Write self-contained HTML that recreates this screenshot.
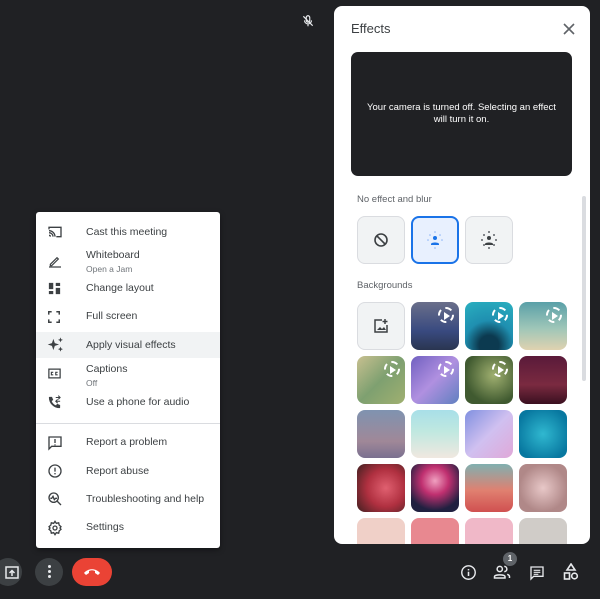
<!DOCTYPE html>
<html><head><meta charset="utf-8"><style>
*{margin:0;padding:0;box-sizing:border-box}
body{width:600px;height:599px;background:#202124;position:relative;overflow:hidden;font-family:"Liberation Sans",Arial,sans-serif}
.abs{position:absolute}
#panel{left:334px;top:6px;width:256px;height:538px;background:#fff;border-radius:8px;overflow:hidden}
#menu{left:36px;top:212px;width:184px;height:336px;background:#fff;border-radius:3px;box-shadow:0 2px 6px rgba(0,0,0,.4)}
.mi{position:absolute;left:0;width:184px;font-size:10.5px;color:#3c4043}
.mi .t{position:absolute;left:50px}
.mi .s{position:absolute;left:50px;font-size:8.5px;color:#70757a}
.mi svg{position:absolute;left:11px}
.tile{position:absolute;width:48px;height:48px;border-radius:8px;overflow:hidden}
.play{position:absolute;right:5px;top:5px;width:16px;height:16px;border-radius:50%;border:2px dashed #fff;}
.play:after{content:"";position:absolute;left:4px;top:2.5px;border-left:6px solid #fff;border-top:4px solid transparent;border-bottom:4px solid transparent}
.btn{position:absolute;border-radius:50%}
</style></head><body>

<!-- muted mic -->
<svg class="abs" style="left:301px;top:14px" width="14" height="14" viewBox="0 0 24 24"><path d="M12 3a3 3 0 0 0-3 3v5a3 3 0 0 0 6 0V6a3 3 0 0 0-3-3zM6 11a6 6 0 0 0 12 0M12 17v4" stroke="#e8eaed" stroke-width="2" fill="none"/><path d="M4 4l16 16" stroke="#e8eaed" stroke-width="2"/></svg>

<div id="panel" class="abs">
  <div class="abs" style="left:17px;top:15px;font-size:13px;color:#3c4043">Effects</div>
  <svg class="abs" style="left:229px;top:17px" width="12" height="12" viewBox="0 0 12 12"><path d="M1 1l10 10M11 1L1 11" stroke="#5f6368" stroke-width="1.6"/></svg>
  <div class="abs" style="left:17px;top:46px;width:221px;height:124px;background:#202124;border-radius:7px;color:#fff;font-size:9.5px;text-align:center;padding-top:50px;line-height:12px">Your camera is turned off. Selecting an effect<br>will turn it on.</div>
  <div class="abs" style="left:248px;top:190px;width:4px;height:185px;background:#dadce0;border-radius:2px"></div>
  <div class="abs" style="left:23px;top:188px;font-size:9.5px;color:#5f6368">No effect and blur</div>
  <div class="tile" style="left:23px;top:210px;background:#f1f3f4;border:1px solid #dadce0">
    <svg style="position:absolute;left:15px;top:15px" width="16" height="16" viewBox="0 0 16 16"><circle cx="8" cy="8" r="6" stroke="#3c4043" stroke-width="1.6" fill="none"/><path d="M4 4l8 8" stroke="#3c4043" stroke-width="1.6"/></svg></div>
  <div class="tile" style="left:77px;top:210px;background:#e8f0fe;border:2px solid #1a73e8">
    <svg style="position:absolute;left:12px;top:12px" width="20" height="20" viewBox="0 0 20 20"><circle cx="10" cy="8" r="2" fill="#1a73e8"/><path d="M6 14c0-2 8-2 8 0v1H6z" fill="#1a73e8"/><g fill="#8ab4f8"><circle cx="3" cy="10" r=".8"/><circle cx="17" cy="10" r=".8"/><circle cx="10" cy="2" r=".8"/><circle cx="10" cy="18" r=".8"/><circle cx="5" cy="5" r=".8"/><circle cx="15" cy="5" r=".8"/></g></svg></div>
  <div class="tile" style="left:131px;top:210px;background:#f1f3f4;border:1px solid #dadce0">
    <svg style="position:absolute;left:13px;top:13px" width="20" height="20" viewBox="0 0 20 20"><circle cx="10" cy="8" r="2" fill="#3c4043"/><path d="M6 14c0-2 8-2 8 0v1H6z" fill="#3c4043"/><g fill="#5f6368"><circle cx="3" cy="10" r="1"/><circle cx="17" cy="10" r="1"/><circle cx="10" cy="2" r="1"/><circle cx="10" cy="18" r="1"/><circle cx="5" cy="5" r="1"/><circle cx="15" cy="5" r="1"/><circle cx="5" cy="15" r="1"/><circle cx="15" cy="15" r="1"/></g></svg></div>
  <div class="abs" style="left:23px;top:274px;font-size:9.5px;color:#5f6368">Backgrounds</div>
  <div class="tile" style="left:23px;top:296px;background:#f1f3f4;border:1px solid #dadce0">
    <svg style="position:absolute;left:15px;top:15px" width="16" height="16" viewBox="0 0 16 16"><path d="M9 2H2v12h12V7" stroke="#3c4043" stroke-width="1.5" fill="none"/><path d="M12 1v5M9.5 3.5h5" stroke="#3c4043" stroke-width="1.5"/><path d="M4 12l3-3 2 2 2-2 2 3z" fill="#3c4043"/></svg></div>
  <div class="tile" style="left:77px;top:296px;background:linear-gradient(#6a6f8a,#394a80 60%,#2a3550)"><div class="play"></div></div>
  <div class="tile" style="left:131px;top:296px;background:radial-gradient(circle at 50% 90%,#0c3a50 20%,#1f8fb0 50%,#2ab0c0)"><div class="play"></div></div>
  <div class="tile" style="left:185px;top:296px;background:linear-gradient(#5aa0a8,#9fc6b8 55%,#e0d2b0)"><div class="play"></div></div>
  <div class="tile" style="left:23px;top:350px;background:linear-gradient(135deg,#c8c090,#7ea070 50%,#a0b070)"><div class="play"></div></div>
  <div class="tile" style="left:77px;top:350px;background:linear-gradient(135deg,#7060c0,#b090e0 50%,#6080c0)"><div class="play"></div></div>
  <div class="tile" style="left:131px;top:350px;background:radial-gradient(circle at 60% 40%,#a0b070,#405a30 70%)"><div class="play"></div></div>
  <div class="tile" style="left:185px;top:350px;background:linear-gradient(#5a1a3a,#7a2a40 60%,#3a1020)"></div>
  <div class="tile" style="left:23px;top:404px;background:linear-gradient(#7f93b0,#a08898 65%,#7a7090)"></div>
  <div class="tile" style="left:77px;top:404px;background:linear-gradient(#a8dfe8,#c0e8e0 45%,#f0e8e0)"></div>
  <div class="tile" style="left:131px;top:404px;background:linear-gradient(135deg,#8090e0,#d0c0f0 50%,#e0a8d8)"></div>
  <div class="tile" style="left:185px;top:404px;background:radial-gradient(circle,#30b8d0,#0878a0 80%)"></div>
  <div class="tile" style="left:23px;top:458px;background:radial-gradient(circle at 60% 50%,#e06070,#b03040 50%,#402020)"></div>
  <div class="tile" style="left:77px;top:458px;background:radial-gradient(circle at 50% 35%,#f0a0c0,#c03070 35%,#202040 75%)"></div>
  <div class="tile" style="left:131px;top:458px;background:linear-gradient(#80b0b0,#e08070 55%,#d05050)"></div>
  <div class="tile" style="left:185px;top:458px;background:radial-gradient(circle,#e8c8c8,#b08888 70%)"></div>
  <div class="tile" style="left:23px;top:512px;background:#f0d0c8"></div>
  <div class="tile" style="left:77px;top:512px;background:#e88890"></div>
  <div class="tile" style="left:131px;top:512px;background:#f0b8c8"></div>
  <div class="tile" style="left:185px;top:512px;background:#d0ccc8"></div>
</div>

<div id="menu" class="abs">
  <div class="mi" style="top:12px;height:16px"><svg width="16" height="16" viewBox="0 0 24 24" style="top:0"><path d="M3 8V5h18v14h-7M3 17a2 2 0 0 1 2 2M3 13a6 6 0 0 1 6 6M3 10a9 9 0 0 1 9 9" stroke="#3c4043" stroke-width="2" fill="none"/></svg><span class="t" style="top:2px">Cast this meeting</span></div>
  <div class="mi" style="top:37px"><svg width="16" height="16" viewBox="0 0 24 24" style="top:4px"><path d="M5 17l10-10 2 2-10 10H5zM3 21h18" stroke="#3c4043" stroke-width="1.8" fill="none"/></svg><span class="t" style="top:0">Whiteboard</span><span class="s" style="top:15px">Open a Jam</span></div>
  <div class="mi" style="top:69px"><svg width="15" height="15" viewBox="0 0 24 24" style="top:0"><path d="M3 3h7v10H3zM14 3h7v5h-7zM3 16h7v5H3zM14 11h7v10h-7z" fill="#3c4043"/></svg><span class="t" style="top:1px">Change layout</span></div>
  <div class="mi" style="top:98px"><svg width="14" height="14" viewBox="0 0 24 24" style="top:0"><path d="M3 8V3h5M16 3h5v5M21 16v5h-5M8 21H3v-5" stroke="#3c4043" stroke-width="2.5" fill="none"/></svg><span class="t" style="top:0">Full screen</span></div>
  <div class="mi" style="top:120px;height:26px;background:#f1f3f4"><svg width="17" height="17" viewBox="0 0 24 24" style="top:4px"><path d="M9 4l2 6 6 2-6 2-2 6-2-6-6-2 6-2zM19 2l1 2.5 2.5 1-2.5 1L19 9l-1-2.5-2.5-1 2.5-1zM19 15l1 2.5 2.5 1-2.5 1L19 22l-1-2.5-2.5-1 2.5-1z" fill="#3c4043"/></svg><span class="t" style="top:7px">Apply visual effects</span></div>
  <div class="mi" style="top:151px"><svg width="15" height="15" viewBox="0 0 24 24" style="top:3px"><rect x="3" y="5" width="18" height="14" stroke="#3c4043" stroke-width="2" fill="none"/><path d="M10 10H7v4h3M17 10h-3v4h3" stroke="#3c4043" stroke-width="1.8" fill="none"/></svg><span class="t" style="top:0">Captions</span><span class="s" style="top:15px">Off</span></div>
  <div class="mi" style="top:183px"><svg width="15" height="15" viewBox="0 0 24 24" style="top:0"><path d="M4 3h4l2 5-2.5 1.5a11 11 0 0 0 7 7L16 14l5 2v4a1 1 0 0 1-1 1A17 17 0 0 1 3 4a1 1 0 0 1 1-1z" fill="#3c4043"/><path d="M14 4h7M18 1l3 3-3 3M21 10h-7M17 7l-3 3 3 3" stroke="#3c4043" stroke-width="1.6" fill="none"/></svg><span class="t" style="top:1px">Use a phone for audio</span></div>
  <div class="abs" style="left:0;top:211px;width:184px;height:1px;background:#dadce0"></div>
  <div class="mi" style="top:223px"><svg width="16" height="16" viewBox="0 0 24 24" style="top:0"><path d="M3 3h18v14H7l-4 4z" stroke="#3c4043" stroke-width="2" fill="none"/><path d="M12 6v6M12 14v1.5" stroke="#3c4043" stroke-width="2"/></svg><span class="t" style="top:1px">Report a problem</span></div>
  <div class="mi" style="top:251px"><svg width="16" height="16" viewBox="0 0 24 24" style="top:0"><circle cx="12" cy="12" r="9" stroke="#3c4043" stroke-width="2" fill="none"/><path d="M12 7v6M12 15v2" stroke="#3c4043" stroke-width="2"/></svg><span class="t" style="top:2px">Report abuse</span></div>
  <div class="mi" style="top:279px"><svg width="16" height="16" viewBox="0 0 24 24" style="top:0"><circle cx="10" cy="10" r="7" stroke="#3c4043" stroke-width="2" fill="none"/><path d="M15 15l6 6M5 11h2l2-3 2 5 2-2h2" stroke="#3c4043" stroke-width="2" fill="none"/></svg><span class="t" style="top:2px">Troubleshooting and help</span></div>
  <div class="mi" style="top:308px"><svg width="16" height="16" viewBox="0 0 24 24" style="top:0"><path d="M12 2l2 3 3.5-.8.8 3.5L21 10l-1.5 2 1.5 2-2.7 2.3-.8 3.5L14 19l-2 3-2-3-3.5.8-.8-3.5L3 14l1.5-2L3 10l2.7-2.3.8-3.5L10 5z" stroke="#3c4043" stroke-width="2" fill="none"/><circle cx="12" cy="12" r="3" stroke="#3c4043" stroke-width="2" fill="none"/></svg><span class="t" style="top:1px">Settings</span></div>
</div>

<!-- bottom bar -->
<div class="btn" style="left:-6px;top:558px;width:28px;height:28px;background:#3c4043"></div>
<svg class="abs" style="left:5px;top:566px" width="14" height="13" viewBox="0 0 14 13"><rect x="1" y="1" width="12" height="11" stroke="#e8eaed" stroke-width="1.5" fill="none"/><path d="M7 10V5M4.5 7L7 4.5 9.5 7" stroke="#e8eaed" stroke-width="1.5" fill="none"/></svg>
<div class="btn" style="left:35px;top:558px;width:28px;height:28px;background:#3c4043"></div>
<div class="abs" style="left:47.5px;top:565px;width:3px;height:3px;background:#e8eaed;border-radius:50%;box-shadow:0 5px 0 #e8eaed,0 10px 0 #e8eaed"></div>
<div class="abs" style="left:72px;top:558px;width:40px;height:28px;background:#ea4335;border-radius:14px"></div>
<svg class="abs" style="left:83px;top:567px" width="18" height="9" viewBox="0 0 18 9"><path d="M1 6c4-5 12-5 16 0l-2 2-3-2V4c-2-1-4-1-6 0v2L3 8z" fill="#fff"/></svg>

<svg class="abs" style="left:460px;top:564px" width="17" height="17" viewBox="0 0 24 24"><circle cx="12" cy="12" r="9.5" stroke="#e8eaed" stroke-width="2" fill="none"/><path d="M12 11v6M12 7v2" stroke="#e8eaed" stroke-width="2.2"/></svg>
<div class="abs" style="left:503px;top:552px;width:14px;height:14px;border-radius:50%;background:#5f6368;color:#fff;font-size:8px;font-weight:bold;text-align:center;line-height:14px">1</div>
<svg class="abs" style="left:493px;top:564px" width="18" height="16" viewBox="0 0 24 20"><circle cx="9" cy="6" r="3.5" stroke="#e8eaed" stroke-width="2" fill="none"/><path d="M2 18v-2c0-3 14-3 14 0v2z" stroke="#e8eaed" stroke-width="2" fill="none"/><path d="M15 2.5a3.5 3.5 0 0 1 0 7M19 13c2 1 3 2 3 3v2" stroke="#e8eaed" stroke-width="2" fill="none"/></svg>
<svg class="abs" style="left:529px;top:565px" width="16" height="16" viewBox="0 0 24 24"><path d="M3 3h18v14H7l-4 4z" stroke="#e8eaed" stroke-width="2" fill="none"/><path d="M7 8h10M7 11h10M7 14h7" stroke="#e8eaed" stroke-width="1.8"/></svg>
<svg class="abs" style="left:563px;top:563px" width="16" height="18" viewBox="0 0 16 18"><path d="M8 1L12 7H4z" stroke="#e8eaed" stroke-width="1.6" fill="none"/><rect x="1.5" y="10" width="5" height="6" stroke="#e8eaed" stroke-width="1.6" fill="none"/><circle cx="11.5" cy="13" r="2.8" stroke="#e8eaed" stroke-width="1.6" fill="none"/></svg>
</body></html>
